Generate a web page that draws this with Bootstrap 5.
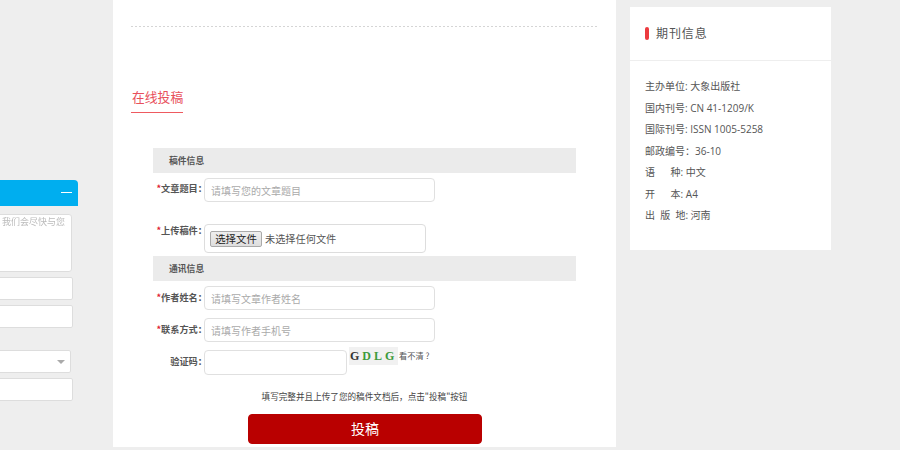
<!DOCTYPE html>
<html lang="zh-CN">
<head>
<meta charset="utf-8">
<title>在线投稿</title>
<link href="https://cdn.jsdelivr.net/npm/bootstrap@5.3.0/dist/css/bootstrap.min.css" rel="stylesheet">
<style>
html,body{height:450px;overflow:hidden}
body{background:#eee;font-family:"Noto Sans CJK SC","Liberation Sans",sans-serif;color:#555;font-size:10px;line-height:1.3}
.page-wrap{padding-left:113px;gap:14px;height:450px;align-items:flex-start}
.main-col{width:503px;height:447px;background:#fff;padding:0 18px;flex:none}
.dash-line{height:1px;background-image:repeating-linear-gradient(90deg,#d5d5d5 0 2px,transparent 2px 4px);margin-top:26px;width:467px}
.sub-title{display:inline-block;margin-top:61px;color:#e8505b;font-size:12.8px;line-height:18px;padding-bottom:6px;border-bottom:1px solid #ee5a60;width:52px;white-space:nowrap;padding-left:1px}
.form-wrap{margin-left:22px;width:423px;margin-top:35px}
.sect-bar{background:#ebebeb;height:25px;line-height:25px;padding-left:16px;font-weight:700;font-size:8.8px;color:#555}
.frow{align-items:flex-start}
.flabel{width:54px;margin-right:-3px;text-align:right;flex:none;font-weight:700;font-size:9.2px;color:#555;white-space:nowrap;padding-top:5px}
.flabel-file{padding-top:1px}
.flabel-low{padding-top:6px}
.flabel i{color:#e0202c;font-style:normal}
.fbox{height:24px;width:231px;border:1px solid #e0e0e0;border-radius:4px;background:#fff;padding:0 6px;font-size:10px;color:#333;box-shadow:none}
.fbox::placeholder{color:#aaa}
.fbox:focus{border-color:#e0e0e0;box-shadow:none}
.fbox-code{width:143px;height:25px}
.file-box{width:222px;height:29px;border:1px solid #ddd;border-radius:4px;padding:6px 5px;font-size:10.2px;color:#555;gap:3px}
.file-btn{width:52px;height:16px;padding:0;border:1px solid #aaa;border-radius:2px;background:linear-gradient(#efefef,#dedede);font-size:10.4px;line-height:14px;color:#222}
.code-img{width:49px;height:18px;flex:none;margin-left:2px;margin-top:-3px;background:#f1f1f1;font-family:"Liberation Serif",serif;font-weight:700;font-size:12px;line-height:18px;letter-spacing:3px;white-space:nowrap;overflow:hidden;padding-left:1px}
.code-img b:nth-child(1){color:#333}.code-img b:nth-child(n+2){color:#3c9a3c}
.code-help{margin-left:1px;font-size:8.2px;color:#555;white-space:nowrap}
.hint-line{margin-top:15px;text-align:center;font-size:8.6px;color:#444;line-height:12px}
.send-btn{display:block;width:234px;height:30px;margin:12px 0 0 95px;padding:0 0 3px;background:#b90000;border:1px solid #b90000;border-radius:4px;color:#fff;font-size:14px;line-height:24px}
.send-btn:hover{background:#b90000;color:#fff;border-color:#b90000}
.r1{margin-top:5px}.r2{margin-top:22px}.r3{margin-top:3px}.r4{margin-top:5px}.r5{margin-top:8px}.r6{margin-top:8px}
.info-card{width:201px;height:243px;margin-top:7px;background:#fff;flex:none;border:0;border-radius:0}
.info-head{height:54px;padding:0 0 1px 15px;border-bottom:1px solid #eee;font-size:12px;color:#555;letter-spacing:.9px;gap:7px}
.red-tick{width:4px;height:13px;border-radius:2px;background:#ec3a3f}
.info-body{padding:15px 15px 0;line-height:21.5px;font-family:"Open Sans","Noto Sans CJK SC",sans-serif;font-size:10px;color:#555;white-space:pre}
.float-panel{position:fixed;left:-122px;top:180px;width:200px;height:230px}
.float-head{height:26px;background:#00aeef;border-radius:0 4px 0 0;padding-right:6px}
.minus-bar{width:11px;height:1px;background:#fff;margin-top:-1px}
.float-field{display:block;width:195px;border:1px solid #ddd;border-radius:2px;background:#fff;height:23px;margin-top:5px}
.float-area{width:194px;height:58px;margin-top:8px;font-size:9px;padding:1px 0 0 123px;color:#bbb;line-height:12px;border-radius:3px;white-space:nowrap;overflow:hidden}
.select-caret{width:0;height:0;border-left:4px solid transparent;border-right:4px solid transparent;border-top:4px solid #aaa;margin-right:5px}
.float-select{width:193px;margin-top:22px}
</style>
</head>
<body>
<aside class="float-panel">
  <div class="float-head d-flex justify-content-end align-items-center"><span class="minus-bar"></span></div>
  <div class="float-field float-area">我们会尽快与您</div>
  <div class="float-field"></div>
  <div class="float-field"></div>
  <div class="float-field float-select d-flex align-items-center justify-content-end"><span class="select-caret"></span></div>
  <div class="float-field"></div>
</aside>
<div class="page-wrap d-flex">
  <main class="main-col">
    <div class="dash-line"></div>
    <div class="sub-title">在线投稿</div>
    <form class="form-wrap" onsubmit="return false">
      <div class="sect-bar">稿件信息</div>
      <div class="frow d-flex r1"><label class="flabel"><i>*</i>文章题目：</label><input class="fbox form-control" placeholder="请填写您的文章题目"></div>
      <div class="frow d-flex r2"><label class="flabel flabel-file"><i>*</i>上传稿件：</label><div class="file-box d-flex align-items-center"><button type="button" class="file-btn">选择文件</button><span>未选择任何文件</span></div></div>
      <div class="sect-bar r3">通讯信息</div>
      <div class="frow d-flex r4"><label class="flabel flabel-low"><i>*</i>作者姓名：</label><input class="fbox form-control" placeholder="请填写文章作者姓名"></div>
      <div class="frow d-flex r5"><label class="flabel flabel-low"><i>*</i>联系方式：</label><input class="fbox form-control" placeholder="请填写作者手机号"></div>
      <div class="frow d-flex r6"><label class="flabel flabel-low">验证码：</label><input class="fbox fbox-code form-control"><div class="code-img"><b>G</b><b>D</b><b>L</b><b>G</b></div><span class="code-help">看不清 ?</span></div>
      <p class="hint-line mb-0">填写完整并且上传了您的稿件文档后，点击"投稿"按钮</p>
      <button type="button" class="send-btn btn">投稿</button>
    </form>
  </main>
  <section class="info-card card">
    <div class="info-head d-flex align-items-center"><span class="red-tick"></span><span>期刊信息</span></div>
    <div class="info-body">主办单位: 大象出版社
国内刊号: CN 41-1209/K
国际刊号: ISSN 1005-5258
邮政编号：36-10
语      种: 中文
开      本: A4
出  版  地: 河南</div>
  </section>
</div>
</body>
</html>
